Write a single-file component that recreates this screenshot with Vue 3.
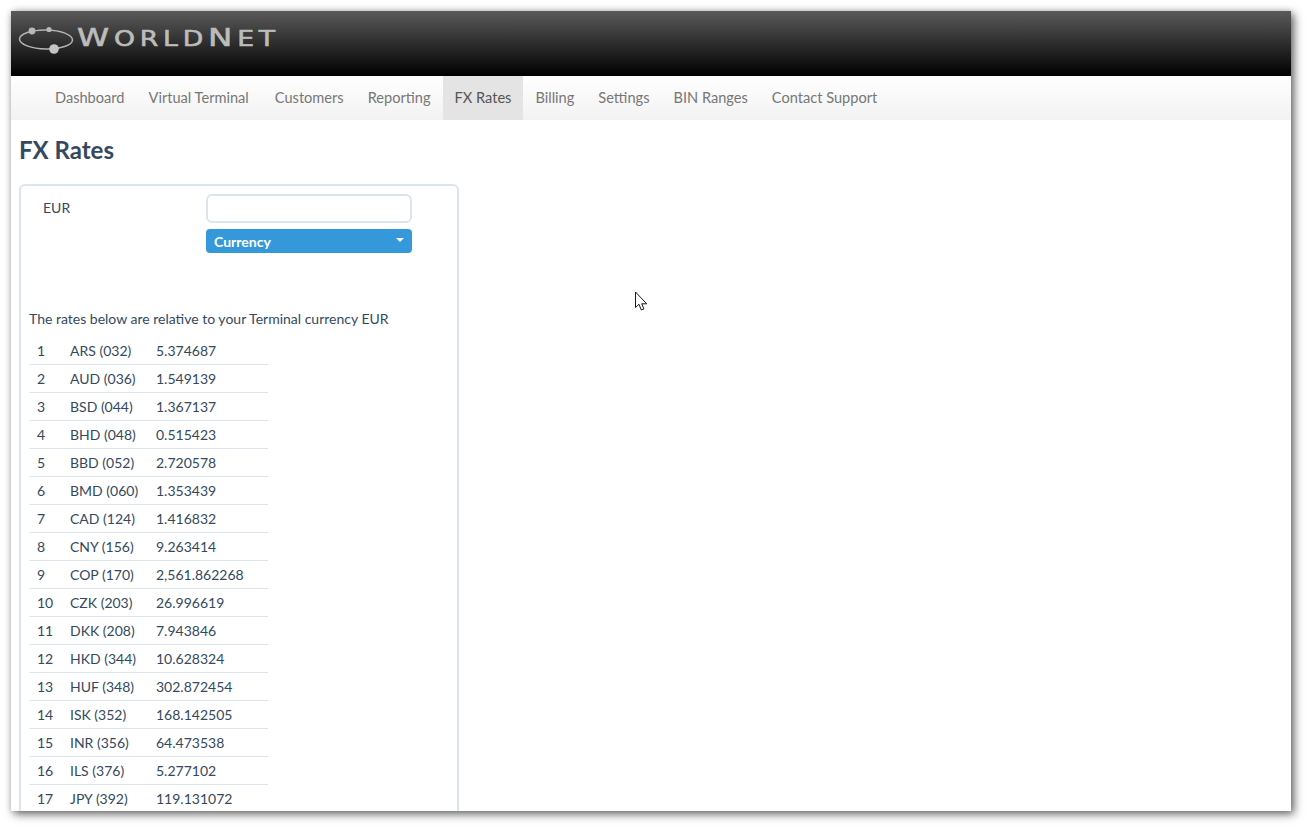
<script setup>
const navItems = ['Dashboard', 'Virtual Terminal', 'Customers', 'Reporting', 'FX Rates', 'Billing', 'Settings', 'BIN Ranges', 'Contact Support']
const rates = [
  ['ARS (032)', '5.374687'], ['AUD (036)', '1.549139'], ['BSD (044)', '1.367137'],
  ['BHD (048)', '0.515423'], ['BBD (052)', '2.720578'], ['BMD (060)', '1.353439'],
  ['CAD (124)', '1.416832'], ['CNY (156)', '9.263414'], ['COP (170)', '2,561.862268'],
  ['CZK (203)', '26.996619'], ['DKK (208)', '7.943846'], ['HKD (344)', '10.628324'],
  ['HUF (348)', '302.872454'], ['ISK (352)', '168.142505'], ['INR (356)', '64.473538'],
  ['ILS (376)', '5.277102'], ['JPY (392)', '119.131072']
]
</script>

<template>
  <div class="window">
    <header class="banner">
      <svg class="orbit" width="58" height="30" viewBox="0 0 58 30" aria-hidden="true">
        <ellipse cx="28" cy="15.5" rx="26.5" ry="9.5" fill="none" stroke="#b4b4b4" stroke-width="1.5" transform="rotate(1 28 15.5)" />
        <circle cx="14" cy="7" r="3.4" fill="#b8b8b8" />
        <circle cx="31" cy="5.5" r="2.6" fill="#b8b8b8" />
        <circle cx="36" cy="25" r="4.8" fill="#c4c4c4" />
      </svg>
      <div class="brand"><span class="cap">W</span>ORLD<span class="cap">N</span>ET</div>
    </header>
    <nav class="nav">
      <a v-for="item in navItems" :key="item" class="nav-item" :class="{ active: item === 'FX Rates' }">{{ item }}</a>
    </nav>
    <main class="content">
      <h1>FX Rates</h1>
      <section class="card">
        <div class="converter">
          <label>EUR</label>
          <div class="controls">
            <input type="text" />
            <button type="button"><span>Currency</span><i class="caret"></i></button>
          </div>
        </div>
        <p>The rates below are relative to your Terminal currency EUR</p>
        <table>
          <colgroup><col class="c1" /><col class="c2" /><col class="c3" /></colgroup>
          <tbody>
            <tr v-for="(r, i) in rates" :key="r[0]">
              <td>{{ i + 1 }}</td><td>{{ r[0] }}</td><td>{{ r[1] }}</td>
            </tr>
          </tbody>
        </table>
      </section>
    </main>
    <svg class="cursor" width="14" height="21" viewBox="0 0 14 21" aria-hidden="true">
      <path d="M1.5 1 L1.5 16.5 L5 13.3 L7.3 19 L9.9 18 L7.7 12.8 L12.7 12.8 Z" fill="#fff" stroke="#1a1a1a" stroke-width="1" />
    </svg>
  </div>
</template>

<style>
html, body { margin: 0; background: #fff; overflow: hidden; height: 830px; }
</style>

<style scoped>
.window {
  position: relative;
  box-sizing: border-box;
  width: 1280px;
  height: 800px;
  margin: 0 0 0 11px;
  top: 11px;
  overflow: hidden;
  background: #fff;
  font-family: Lato, "Open Sans", sans-serif;
  font-size: 14px;
  color: #34495e;
  box-shadow: 3px 3px 9px rgba(0, 0, 0, 0.6), 0 0 6px rgba(0, 0, 0, 0.14);
}
.banner {
  height: 65px;
  display: flex;
  align-items: flex-start;
  background: linear-gradient(#5a5a5a, #000);
  box-sizing: border-box;
  padding: 13px 0 0 7px;
}
.orbit { flex: none; }
.brand {
  margin: 0 0 0 1px;
  font-family: "DejaVu Sans", sans-serif;
  font-size: 20.5px;
  line-height: 28px;
  letter-spacing: 3.7px;
  color: #bcbcbc;
  -webkit-text-stroke: 0.6px #bcbcbc;
  transform: scaleX(1.3);
  transform-origin: left center;
  white-space: nowrap;
}
.cap { font-size: 25px; }
.nav {
  height: 44px;
  display: flex;
  padding-left: 32px;
  background: linear-gradient(#fff, #f2f2f2);
}
.nav-item {
  padding: 0 12px;
  font-size: 14.6px;
  line-height: 44px;
  color: #777;
}
.nav-item:nth-child(2) { padding-right: 14px; }
.nav-item.active { background: #e4e4e4; color: #555; }
.content { padding: 0 8px; }
h1 {
  margin: 0;
  padding-top: 15px;
  height: 64px;
  box-sizing: border-box;
  font-size: 24px;
  line-height: 29px;
  font-weight: 700;
  color: #34495e;
}
.card {
  box-sizing: border-box;
  width: 440px;
  height: 700px;
  border: 2px solid #dce5ee;
  border-radius: 6px;
  padding: 8px 8px 0;
}
.converter { display: flex; height: 116px; }
label { width: 177px; padding: 5px 0 0 14px; box-sizing: border-box; line-height: 17px; }
.controls { width: 206px; display: flex; flex-direction: column; gap: 6px; }
input {
  box-sizing: border-box;
  width: 206px;
  height: 29px;
  border: 2px solid #dce5ee;
  border-radius: 6px;
  background: #fff;
  outline: none;
}
button {
  box-sizing: border-box;
  width: 206px;
  height: 24px;
  padding: 0 8px;
  display: flex;
  align-items: center;
  justify-content: space-between;
  border: 0;
  border-radius: 4px;
  background: #3498db;
  color: #fff;
  font: 700 14px Lato, sans-serif;
}
.caret {
  width: 0;
  height: 0;
  margin-top: -3px;
  border-left: 4px solid transparent;
  border-right: 4px solid transparent;
  border-top: 4px solid #fff;
}
p { margin: 0 0 10px; line-height: 17px; }
table { width: 239px; table-layout: fixed; border-collapse: collapse; }
.c1 { width: 33px; }
.c2 { width: 86px; }
.c3 { width: 120px; }
td {
  height: 27px;
  padding: 0 0 0 8px;
  border-bottom: 1px solid #dce5ee;
  line-height: 27px;
  white-space: nowrap;
}
.cursor { position: absolute; left: 623px; top: 280px; }
</style>
